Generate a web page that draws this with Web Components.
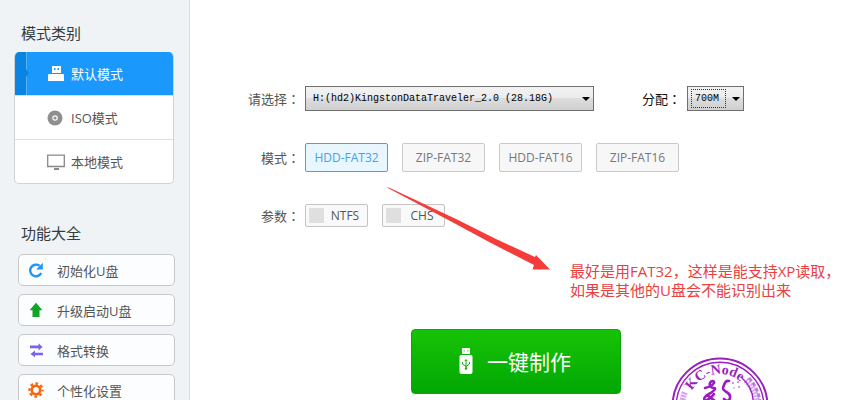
<!DOCTYPE html>
<html lang="zh-CN">
<head>
<meta charset="UTF-8">
<meta name="viewport" content="width=device-width, initial-scale=1">
<title>U盘启动制作</title>
<style>
  :root {
    --blue: #1b98fb;
    --blue-dark: #0a84e3;
    --text: #555;
    --heading: #333b40;
    --line: #d0d3d6;
    --note: #e8413f;
    --stamp: #9a1fc0;
  }
  body {
    margin: 0;
    background: #fff;
    color: var(--text);
    font-family: "Open Sans", "Noto Sans CJK SC", sans-serif;
    font-size: 13px;
  }
</style>
</head>
<body>
<usb-app>
  <side-group slot="side" heading="模式类别">
    <mode-list>
      <mode-item active>
        <svg slot="icon" width="18" height="16" viewBox="0 0 18 16"><path fill="#fff" d="M5 0h9v7H5zM1 9a1 1 0 0 1 1-1h14a1 1 0 0 1 1 1v6H1z"/><path fill="#1b98fb" d="M7 2h1.500v2H7zM10.500 2H12v2h-1.500z"/></svg>
        默认模式
      </mode-item>
      <mode-item>
        <svg slot="icon" width="18" height="16" viewBox="0 0 18 16"><circle cx="8" cy="8" r="7.500" fill="#8f8f8f"/><circle cx="8" cy="8" r="2.200" fill="none" stroke="#fff" stroke-width="1.200"/></svg>
        ISO模式
      </mode-item>
      <mode-item>
        <svg slot="icon" width="18" height="16" viewBox="0 0 18 16"><path fill="none" stroke="#888" stroke-width="1.300" d="M.7 1.200h16.600v11.300H.7z"/><path fill="#888" d="M7 14h5v2H7z"/></svg>
        本地模式
      </mode-item>
    </mode-list>
  </side-group>

  <side-group slot="side" heading="功能大全" inset>
    <tool-button>
      <svg slot="icon" width="16" height="16" viewBox="0 0 16 16"><path fill="none" stroke="#2196f3" stroke-width="2.400" d="M11.500 3.800A5.800 5.800 0 1 0 13.200 11"/><path fill="#2196f3" d="M14.800.8v6.700H8.200z"/></svg>
      初始化U盘
    </tool-button>
    <tool-button>
      <svg slot="icon" width="16" height="16" viewBox="0 0 16 16"><path fill="#0fa626" d="M8 .8l6.500 7.400h-3V15h-7V8.200h-3z"/></svg>
      升级启动U盘
    </tool-button>
    <tool-button>
      <svg slot="icon" width="16" height="16" viewBox="0 0 16 16"><path fill="#7a62ee" d="M2 3.500h8.500V1.300L14.500 5l-4 3.500V6.300H2zM15 13.200H7v2.100L2.500 12 7 8.500v2.200h8z"/></svg>
      格式转换
    </tool-button>
    <tool-button>
      <svg slot="icon" width="16" height="16" viewBox="0 0 16 16"><g fill="none" stroke="#fa640a"><circle cx="8" cy="8" r="4.200" stroke-width="2.600"/><circle cx="8" cy="8" r="6.500" stroke-width="2.400" stroke-dasharray="2.700 2.405" stroke-dashoffset="1.350"/></g></svg>
      个性化设置
    </tool-button>
  </side-group>

  <form-row label="请选择">
    <drop-down name="请选择" wide>H:(hd2)KingstonDataTraveler_2.0 (28.18G)</drop-down>
    <drop-down caption="分配" name="分配" focused>700M</drop-down>
  </form-row>
  <form-row label="模式">
    <choice-box name="mode" checked>HDD-FAT32</choice-box>
    <choice-box name="mode">ZIP-FAT32</choice-box>
    <choice-box name="mode">HDD-FAT16</choice-box>
    <choice-box name="mode">ZIP-FAT16</choice-box>
  </form-row>
  <form-row label="参数">
    <tick-box>NTFS</tick-box>
    <tick-box>CHS</tick-box>
  </form-row>
  <make-button>一键制作</make-button>
  <red-note slot="overlay">最好是用FAT32，这样是能支持XP读取，<br>如果是其他的U盘会不能识别出来</red-note>
  <round-stamp slot="overlay"></round-stamp>
</usb-app>

<script>
class BaseElement extends HTMLElement {
  constructor() {
    super();
    this.attachShadow({ mode: 'open' });
  }

  connectedCallback() {
    this.shadowRoot.innerHTML = this.render();
  }
}

class UsbApp extends BaseElement {
  render() {
    return `
      <style>
        :host {
          display: grid;
          grid-template-columns: 190px 1fr;
          height: 100vh;
          overflow: hidden;
        }
        aside {
          box-sizing: border-box;
          padding: 22px 14px 0;
          background: #eff3f6;
          border-right: 1px solid #d9dfe4;
        }
        main {
          position: relative;
          display: flex;
          flex-direction: column;
          align-items: flex-start;
          gap: 32px;
          padding-top: 86px;
        }
      </style>
      <aside><slot name="side"></slot></aside>
      <main><slot></slot><slot name="overlay"></slot></main>
    `;
  }
}

class SideGroup extends BaseElement {
  render() {
    return `
      <style>
        :host {
          display: block;
          margin-bottom: 38px;
        }
        h2 {
          margin: 0 0 8px 7px;
          font-size: 15px;
          font-weight: normal;
          line-height: 22px;
          color: var(--heading);
        }
        :host([inset]) h2 {
          margin-bottom: 10px;
        }
        .items {
          display: flex;
          flex-direction: column;
          gap: 8px;
        }
        :host([inset]) .items {
          margin-left: 4px;
        }
      </style>
      <h2>${this.getAttribute('heading')}</h2>
      <div class="items"><slot></slot></div>
    `;
  }
}

class ModeList extends BaseElement {
  render() {
    return `
      <style>
        :host {
          display: block;
          margin-right: 1px;
          border: 1px solid var(--line);
          border-top: 0;
          border-radius: 5px;
          overflow: hidden;
          background: #fff;
        }
      </style>
      <slot></slot>
    `;
  }
}

class ModeItem extends BaseElement {
  render() {
    return `
      <style>
        :host {
          display: block;
        }
        :host(:not(:first-child)) {
          border-top: 1px solid #dcdfe2;
        }
        button {
          position: relative;
          display: flex;
          align-items: center;
          gap: 6px;
          width: 100%;
          height: 43px;
          padding: 0 0 0 32px;
          border: 0;
          background: transparent;
          font: inherit;
          color: #555;
        }
        :host([active]) button {
          background: linear-gradient(90deg, var(--blue-dark) 11px, #56b3fa 11px, #56b3fa 12px, var(--blue) 12px);
          color: #fff;
        }
        :host([active]) button::before {
          content: "";
          position: absolute;
          left: 11px;
          top: 17px;
          border: 4px solid transparent;
          border-left: 3px solid var(--blue-dark);
          border-right: 0;
        }
      </style>
      <button type="button"><slot name="icon"></slot><span><slot></slot></span></button>
    `;
  }
}

class ToolButton extends BaseElement {
  render() {
    return `
      <style>
        :host {
          display: block;
        }
        button {
          display: flex;
          align-items: center;
          gap: 13px;
          width: 100%;
          height: 32px;
          padding: 0 0 0 9px;
          border: 1px solid #c8c8ca;
          border-radius: 5px;
          background: #fcfdfe;
          font: inherit;
          color: #555;
        }
      </style>
      <button type="button"><slot name="icon"></slot><span><slot></slot></span></button>
    `;
  }
}

class FormRow extends BaseElement {
  render() {
    return `
      <style>
        :host {
          display: grid;
          grid-template-columns: 110px auto;
          align-items: center;
          column-gap: 5px;
        }
        .label {
          text-align: right;
          white-space: nowrap;
        }
        .colon {
          font-family: "Noto Sans CJK TC", sans-serif;
        }
        .controls {
          display: flex;
          gap: 14px;
        }
      </style>
      <div class="label">${this.getAttribute('label')}<span class="colon" lang="zh-TW">：</span></div>
      <div class="controls" role="group" aria-label="${this.getAttribute('label')}"><slot></slot></div>
    `;
  }
}

class DropDown extends BaseElement {
  render() {
    const caption = this.getAttribute('caption');
    return `
      <style>
        :host {
          display: flex;
          align-items: center;
          gap: 6px;
          color: #111;
        }
        :host([caption]) {
          margin-left: 34px;
        }
        .colon {
          font-family: "Noto Sans CJK TC", sans-serif;
        }
        .field {
          display: grid;
          align-items: center;
          width: 57px;
        }
        :host([wide]) .field {
          width: 289px;
        }
        .field > * {
          grid-area: 1 / 1;
        }
        select {
          appearance: none;
          width: 100%;
          height: 25px;
          padding: 0 20px 0 7px;
          border: 1px solid #6f6f6f;
          border-radius: 0;
          background: linear-gradient(#f3f3f3, #ebebeb 48%, #dddddd 50%, #d0d0d0);
          font: 10px "Liberation Mono", monospace;
          color: #000;
        }
        svg {
          justify-self: end;
          margin-right: 4px;
          pointer-events: none;
        }
        .focus {
          justify-self: start;
          width: 33px;
          height: 17px;
          margin-left: 4px;
          border: 1px dotted #333;
          pointer-events: none;
        }
      </style>
      ${caption ? `<label for="field">${caption}<span class="colon" lang="zh-TW">：</span></label>` : ''}
      <div class="field">
        <select id="field" aria-label="${this.getAttribute('name')}"><option>${this.textContent.trim()}</option></select>
        ${this.hasAttribute('focused') ? '<span class="focus"></span>' : ''}
        <svg width="8" height="4" viewBox="0 0 8 4"><path d="M0 0h8L4 4z"/></svg>
      </div>
    `;
  }
}

class ChoiceBox extends BaseElement {
  render() {
    return `
      <style>
        :host {
          display: block;
        }
        label {
          box-sizing: border-box;
          display: grid;
          place-items: center;
          width: 83px;
          height: 29px;
          border: 1px solid #c9c9c9;
          border-radius: 2px;
          background: #f7f7f7;
          font-size: 12px;
          color: #777;
        }
        input {
          appearance: none;
          margin: 0;
          width: 0;
          height: 0;
          position: absolute;
        }
        label:has(input:checked) {
          border-color: #4a9fe6;
          background: #e8f6ff;
          color: #4a9fe6;
        }
      </style>
      <label><input type="radio" name="${this.getAttribute('name')}" ${this.hasAttribute('checked') ? 'checked' : ''}><span><slot></slot></span></label>
    `;
  }

  connectedCallback() {
    super.connectedCallback();
    // radios in separate shadow roots do not group on their own
    this.shadowRoot.querySelector('input').addEventListener('change', () => {
      this.parentElement.querySelectorAll('choice-box').forEach(box => {
        if (box !== this) box.shadowRoot.querySelector('input').checked = false;
      });
    });
  }
}

class TickBox extends BaseElement {
  render() {
    return `
      <style>
        :host {
          display: block;
        }
        label {
          box-sizing: border-box;
          display: grid;
          grid-template-columns: 15px 1fr;
          align-items: center;
          width: 63px;
          height: 23px;
          padding: 0 1px 0 3px;
          border: 1px solid #c4c4c4;
          border-radius: 2px;
          background: #f9f9f9;
          font-size: 12px;
          text-align: center;
        }
        input {
          appearance: none;
          width: 15px;
          height: 15px;
          margin: 0;
          border-radius: 1px;
          background: #dfdfdf;
        }
        input:checked {
          background: var(--blue);
        }
      </style>
      <label><input type="checkbox"><span><slot></slot></span></label>
    `;
  }
}

class MakeButton extends BaseElement {
  render() {
    return `
      <style>
        :host {
          display: block;
          margin: 70px 0 0 221px;
        }
        button {
          display: flex;
          align-items: center;
          justify-content: center;
          gap: 14px;
          width: 210px;
          height: 65px;
          padding: 0 2px 2px 0;
          border: 1px solid #0ba60b;
          border-radius: 4px;
          background: linear-gradient(#17c306, #02a704);
          font: inherit;
          font-size: 21px;
          color: #fff;
        }
      </style>
      <button type="button">
        <svg width="14" height="28" viewBox="0 0 14 28">
          <path fill="#fff" d="M3 1h8v6H3zM2 8h10a1.500 1.500 0 0 1 1.500 1.500V25A2 2 0 0 1 11.500 27h-9A2 2 0 0 1 .5 25V9.500A1.500 1.500 0 0 1 2 8z"/>
          <path fill="#8fdc88" d="M4.500 3h1.500v1.500H4.500zM8 3h1.500v1.500H8z"/>
          <path fill="none" stroke="#12b00a" stroke-width="1" d="M7 13v8M3.500 15v2L7 19.500l3.500-2.500v-2M5.800 14L7 12.500 8.200 14"/>
          <circle cx="7" cy="21.500" r="1.200" fill="#12b00a"/>
        </svg>
        <span><slot></slot></span>
      </button>
    `;
  }
}

class RedNote extends BaseElement {
  render() {
    return `
      <style>
        :host {
          position: absolute;
          left: 196px;
          top: 187px;
          display: flex;
          color: var(--note);
          font-size: 15px;
          line-height: 19px;
          white-space: nowrap;
          pointer-events: none;
        }
        p {
          margin: 75px 0 0 19px;
        }
      </style>
      <svg width="165" height="84" viewBox="0 0 165 84"><path fill="#f43d3a" d="M0 0L4 1 70 32 110 52 149 70 150 68 164 82.500H146.500L148 78 105 56 67 35.500z"/></svg>
      <p><slot></slot></p>
    `;
  }
}

class RoundStamp extends BaseElement {
  render() {
    return `
      <style>
        :host {
          position: absolute;
          left: 480px;
          top: 357px;
          color: var(--stamp);
          pointer-events: none;
        }
        svg {
          display: block;
        }
        text {
          font: bold 14px "Liberation Serif", serif;
        }
      </style>
      <svg width="100" height="100" viewBox="0 0 100 100">
        <g fill="none" stroke="currentColor">
          <circle cx="50" cy="49" r="47.500" stroke-width="2"/>
          <circle cx="50" cy="49" r="43.800" stroke-width="1.400"/>
          <path id="arc" stroke="none" d="M18 49a32 32 0 0 1 64 0"/>
          <g stroke="#c27be0">
            <path stroke-width="7" stroke-dasharray="2 1" opacity=".6" d="M76 23A37 37 0 0 1 87 49"/>
            <path stroke-width="3" stroke-dasharray="4 2" d="M79 21A40 40 0 0 1 90 49"/>
            <path stroke-width="6" stroke-dasharray="2 1" opacity=".7" d="M12 49A38 38 0 0 1 15 35"/>
          </g>
          <path stroke-width="1.300" d="M72 21A33 33 0 0 1 83 49"/>
          <g stroke-width="2.600" stroke-linecap="round" stroke-linejoin="round">
            <path d="M35 31c4-1 8-3 9-5s-3-3-4 0 1 5 4 5-1 4-5 6-6 5-4 6 7-3 9-6M37 38l8 6"/>
            <path d="M59 24c-3-1-4 1-5 4s-2 4 1 6 6 3 5 7-4 3-6 1"/>
          </g>
        </g>
        <g fill="#c27be0"><circle cx="63" cy="26" r="1"/><circle cx="68" cy="25" r="1"/><circle cx="69" cy="30" r="1"/><circle cx="64" cy="31" r=".8"/></g>
        <text fill="currentColor" text-anchor="middle"><textPath href="#arc" startOffset="44%">KC-Node</textPath></text>
      </svg>
    `;
  }
}

customElements.define('usb-app', UsbApp);
customElements.define('side-group', SideGroup);
customElements.define('mode-list', ModeList);
customElements.define('mode-item', ModeItem);
customElements.define('tool-button', ToolButton);
customElements.define('form-row', FormRow);
customElements.define('drop-down', DropDown);
customElements.define('choice-box', ChoiceBox);
customElements.define('tick-box', TickBox);
customElements.define('make-button', MakeButton);
customElements.define('red-note', RedNote);
customElements.define('round-stamp', RoundStamp);
</script>
</body>
</html>
